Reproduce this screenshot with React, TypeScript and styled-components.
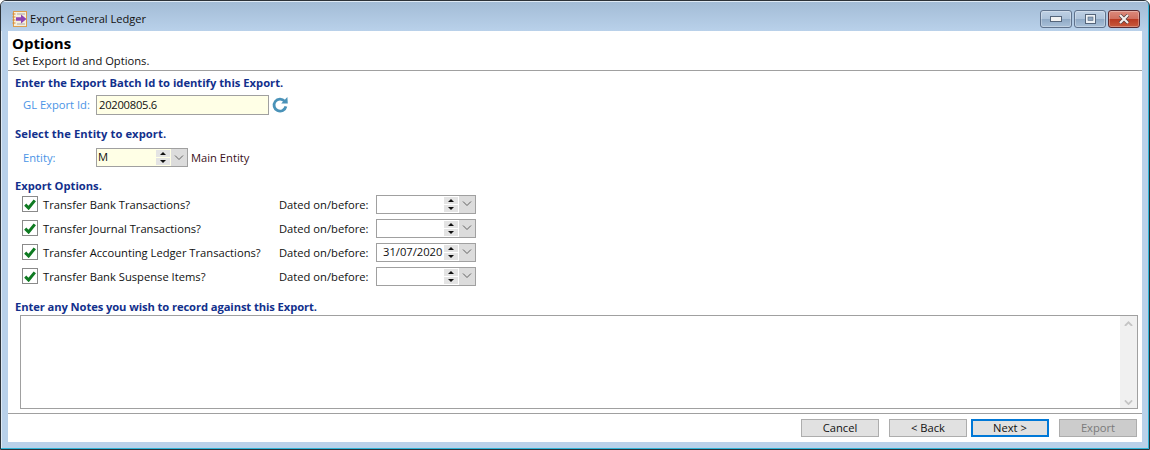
import React from "react";
import styled, { createGlobalStyle } from "styled-components";

const GlobalStyle = createGlobalStyle`
  html, body {
    margin: 0;
    padding: 0;
    background: #fff;
  }
  body {
    font-family: "Open Sans", "Noto Sans", sans-serif;
    font-size: 11.2px;
    color: #111;
  }
`;

const Window = styled.div`
  width: 1150px;
  height: 450px;
  box-sizing: border-box;
  display: flex;
  flex-direction: column;
  background: #b9d1ea;
  border: 1px solid #2c3238;
  border-radius: 6px 6px 0 0;
  padding: 0 7px 7px 7px;
  overflow: hidden;
  box-shadow: inset -1px -1px 0 #2fb4d8, inset 1px 0 0 #dfeaf5;
`;

const TitleBar = styled.div`
  height: 30px;
  flex: none;
  margin: 0 -6px 0 -7px;
  padding: 4px 8px 0 11px;
  display: flex;
  align-items: center;
  gap: 2px;
  background: linear-gradient(#a3bcd6, #b9d1ea);
  border-top: 1px solid #dfeaf5;
  box-sizing: border-box;
`;

const Title = styled.span`
  flex: 1;
  font-size: 11.1px;
  color: #111;
`;

const Controls = styled.div`
  display: flex;
  gap: 2px;
`;

const ControlButton = styled.div<{ $close?: boolean }>`
  width: 30px;
  height: 16px;
  display: flex;
  align-items: center;
  justify-content: center;
  border: 1px solid ${(p) => (p.$close ? "#5a2a30" : "#5f728c")};
  border-radius: 3px;
  background: ${(p) =>
    p.$close
      ? "linear-gradient(#dc8a7c 0%, #d07060 48%, #b93a22 52%, #c85a3c 100%)"
      : "linear-gradient(#bed0e4 0%, #aec3da 48%, #90aac6 52%, #a9c0d8 100%)"};
  box-shadow: inset 0 0 0 1px rgba(255, 255, 255, 0.3);
`;

const Client = styled.div`
  flex: 1;
  display: flex;
  flex-direction: column;
  background: #fff;
  min-height: 0;
`;

const Header = styled.div`
  height: 37px;
  flex: none;
  padding: 2px 0 0 4px;
  border-bottom: 1px solid #a0a0a0;
`;

const HeaderTitle = styled.div`
  font-size: 15px;
  font-weight: 700;
  line-height: 20px;
  color: #000;
`;

const HeaderSub = styled.div`
  font-size: 11.2px;
  line-height: 15px;
  margin-left: 1px;
`;

const Body = styled.div`
  flex: 1;
  display: flex;
  flex-direction: column;
  padding: 4px 4px 0 7px;
  min-height: 0;
`;

const SectionTitle = styled.div<{ $top?: number; $tracking?: number }>`
  font-size: 11.2px;
  font-weight: 700;
  line-height: 15px;
  color: #12308c;
  margin-top: ${(p) => p.$top ?? 0}px;
  letter-spacing: ${(p) => p.$tracking ?? 0}px;
`;

const FieldRow = styled.div<{ $top: number }>`
  display: flex;
  align-items: center;
  margin-top: ${(p) => p.$top}px;
`;

const FieldLabel = styled.label<{ $indent: number }>`
  width: ${(p) => 81 - p.$indent}px;
  padding-left: ${(p) => p.$indent}px;
  padding-bottom: 1px;
  color: #4a94e6;
`;

const TextInput = styled.div`
  width: 173px;
  height: 20px;
  box-sizing: border-box;
  border: 1px solid #a0a0a0;
  background: #ffffe6;
  padding-left: 2px;
  line-height: 18px;
  letter-spacing: -0.25px;
`;

const RefreshIcon = styled.svg`
  margin-left: 2px;
`;

const Combo = styled.div<{ $width: number; $bg: string }>`
  width: ${(p) => p.$width}px;
  height: 19px;
  box-sizing: border-box;
  border: 1px solid #a0a0a0;
  background: ${(p) => p.$bg};
  display: flex;
  align-items: stretch;
`;

const ComboValue = styled.div<{ $pad: number }>`
  flex: 1;
  padding-left: ${(p) => p.$pad}px;
  line-height: 16px;
  white-space: nowrap;
  overflow: hidden;
`;

const Spin = styled.div`
  width: 14px;
  flex: none;
  display: flex;
  flex-direction: column;
  justify-content: space-between;
  padding: 1px 0;
  margin-right: 1px;
`;

const SpinPart = styled.div`
  height: 7px;
  background: #e4e4e4;
  display: flex;
  align-items: center;
  justify-content: center;
`;

const DropButton = styled.div`
  width: 16px;
  flex: none;
  background: #dcdcdc;
  display: flex;
  align-items: center;
  justify-content: center;
`;

const EntityName = styled.span`
  margin-left: 3px;
  padding-bottom: 1px;
  color: #3a1020;
`;

const OptionList = styled.div`
  display: flex;
  flex-direction: column;
  gap: 4px;
  margin-top: 1px;
`;

const OptionRow = styled.div`
  height: 20px;
  display: flex;
  align-items: center;
  padding-left: 7px;
`;

const CheckBox = styled.div`
  width: 16px;
  height: 16px;
  box-sizing: border-box;
  border: 1px solid #8a8a8a;
  background: #fff;
  display: flex;
  align-items: center;
  justify-content: center;
  flex: none;
`;

const OptionLabel = styled.span`
  width: 236px;
  flex: none;
  margin-left: 5px;
`;

const DatedLabel = styled.span`
  width: 97px;
  flex: none;
`;

const Notes = styled.div`
  height: 94px;
  flex: none;
  margin: 1px 0 0 5px;
  width: 1118px;
  box-sizing: border-box;
  border: 1px solid #a0a0a0;
  display: flex;
  justify-content: flex-end;
`;

const ScrollTrack = styled.div`
  width: 17px;
  background: #f0f0f0;
  display: flex;
  flex-direction: column;
  justify-content: space-between;
  align-items: center;
  padding: 5px 0 3px;
  box-sizing: border-box;
`;

const Footer = styled.div`
  height: 29px;
  flex: none;
  border-top: 1px solid #a0a0a0;
  display: flex;
  align-items: flex-start;
  justify-content: flex-end;
  padding: 5px 5px 0 0;
  box-sizing: border-box;
`;

const WizardButton = styled.button<{ $focused?: boolean; $gap?: number }>`
  width: 78px;
  height: 18px;
  box-sizing: border-box;
  margin-left: ${(p) => p.$gap ?? 0}px;
  padding: 0;
  font: inherit;
  line-height: 14px;
  color: ${(p) => (p.disabled ? "#7a7a7a" : "#111")};
  background: ${(p) => (p.disabled ? "#cccccc" : "#e1e1e1")};
  border: ${(p) =>
    p.$focused ? "2px solid #0078d7" : "1px solid #adadad"};
`;

const Chevron = ({ up, size = 9, color = "#606060", weight = 1 }: { up?: boolean; size?: number; color?: string; weight?: number }) => (
  <svg width={size} height={size * 0.6} viewBox="0 0 10 6">
    <path
      d={up ? "M1 5.5 L5 1.5 L9 5.5" : "M1 0.5 L5 4.5 L9 0.5"}
      fill="none"
      stroke={color}
      strokeWidth={weight}
    />
  </svg>
);

const Triangle = ({ up }: { up?: boolean }) => (
  <svg width="6" height="3" viewBox="0 0 6 3">
    <path d={up ? "M3 0 L6 3 L0 3 Z" : "M0 0 L6 0 L3 3 Z"} fill="#111" />
  </svg>
);

const Spinner = () => (
  <Spin>
    <SpinPart>
      <Triangle up />
    </SpinPart>
    <SpinPart>
      <Triangle />
    </SpinPart>
  </Spin>
);

const Picker = ({ value, width, bg, pad }: { value: string; width: number; bg: string; pad: number }) => (
  <Combo $width={width} $bg={bg}>
    <ComboValue $pad={pad}>{value}</ComboValue>
    <Spinner />
    <DropButton>
      <Chevron size={10} />
    </DropButton>
  </Combo>
);

const AppIcon = () => (
  <svg width="16" height="16" viewBox="0 0 16 16">
    <rect x="1.5" y="0.5" width="13" height="15" fill="#f6efdc" stroke="#dc9c4c" />
    <path d="M0.5 3h3M0.5 6h3M0.5 9h3M0.5 12h3" stroke="#d8862c" strokeWidth="1.2" />
    <path d="M5 3h8M5 13h8" stroke="#a8a8a8" strokeWidth="1" />
    <path d="M4 6.2h5V3.6l5.5 4.4L9 12.4V9.8H4z" fill="#8e44b4" />
  </svg>
);

const options = [
  { label: "Transfer Bank Transactions?", date: "" },
  { label: "Transfer Journal Transactions?", date: "" },
  { label: "Transfer Accounting Ledger Transactions?", date: "31/07/2020" },
  { label: "Transfer Bank Suspense Items?", date: "" },
];

export default function App() {
  return (
    <>
      <GlobalStyle />
      <Window>
        <TitleBar>
          <AppIcon />
          <Title>Export General Ledger</Title>
          <Controls>
            <ControlButton>
              <svg width="12" height="6" viewBox="0 0 12 6">
                <rect x="0.5" y="0.5" width="11" height="5" fill="#f2f2f2" stroke="#55657a" />
              </svg>
            </ControlButton>
            <ControlButton>
              <svg width="11" height="10" viewBox="0 0 11 10">
                <rect x="0.5" y="0.5" width="10" height="9" fill="#eef2f6" stroke="#55657a" />
                <rect x="3" y="3" width="5" height="3.5" fill="#8ea6c0" stroke="#55657a" strokeWidth="0.6" />
              </svg>
            </ControlButton>
            <ControlButton $close>
              <svg width="12" height="10" viewBox="0 0 12 10">
                <path d="M2 1 L10 9 M10 1 L2 9" stroke="#4a3a3a" strokeWidth="3.4" />
                <path d="M2 1 L10 9 M10 1 L2 9" stroke="#f4f0ee" strokeWidth="2.2" />
              </svg>
            </ControlButton>
          </Controls>
        </TitleBar>
        <Client>
          <Header>
            <HeaderTitle>Options</HeaderTitle>
            <HeaderSub>Set Export Id and Options.</HeaderSub>
          </Header>
          <Body>
            <SectionTitle>Enter the Export Batch Id to identify this Export.</SectionTitle>
            <FieldRow $top={5}>
              <FieldLabel $indent={8}>GL Export Id:</FieldLabel>
              <TextInput>20200805.6</TextInput>
              <RefreshIcon width="18" height="18" viewBox="0 0 18 18">
                <path d="M13.6 5.2 A6 6 0 1 0 14.9 10.4" fill="none" stroke="#4a92b8" strokeWidth="2.8" />
                <path d="M10.2 7.4 L16.8 7.6 L16.4 1 Z" fill="#4a92b8" />
              </RefreshIcon>
            </FieldRow>
            <SectionTitle $top={11} $tracking={0.08}>Select the Entity to export.</SectionTitle>
            <FieldRow $top={7}>
              <FieldLabel $indent={8}>Entity:</FieldLabel>
              <Picker value="M" width={92} bg="#ffffe6" pad={1} />
              <EntityName>Main Entity</EntityName>
            </FieldRow>
            <SectionTitle $top={11}>Export Options.</SectionTitle>
            <OptionList>
              {options.map((o) => (
                <OptionRow key={o.label}>
                  <CheckBox>
                    <svg width="12" height="11" viewBox="0 0 12 11">
                      <path d="M1.2 5.6 L4.6 9 L10.8 1.4" fill="none" stroke="#0f7a22" strokeWidth="3" />
                    </svg>
                  </CheckBox>
                  <OptionLabel>{o.label}</OptionLabel>
                  <DatedLabel>Dated on/before:</DatedLabel>
                  <Picker value={o.date} width={100} bg="#fff" pad={6} />
                </OptionRow>
              ))}
            </OptionList>
            <SectionTitle $top={13} $tracking={-0.09}>Enter any Notes you wish to record against this Export.</SectionTitle>
            <Notes>
              <ScrollTrack>
                <Chevron up size={9} color="#c4c4c4" weight={2} />
                <Chevron size={9} color="#c4c4c4" weight={2} />
              </ScrollTrack>
            </Notes>
          </Body>
          <Footer>
            <WizardButton>Cancel</WizardButton>
            <WizardButton $gap={10}>&lt; Back</WizardButton>
            <WizardButton $gap={4} $focused>Next &gt;</WizardButton>
            <WizardButton $gap={10} disabled>Export</WizardButton>
          </Footer>
        </Client>
      </Window>
    </>
  );
}
